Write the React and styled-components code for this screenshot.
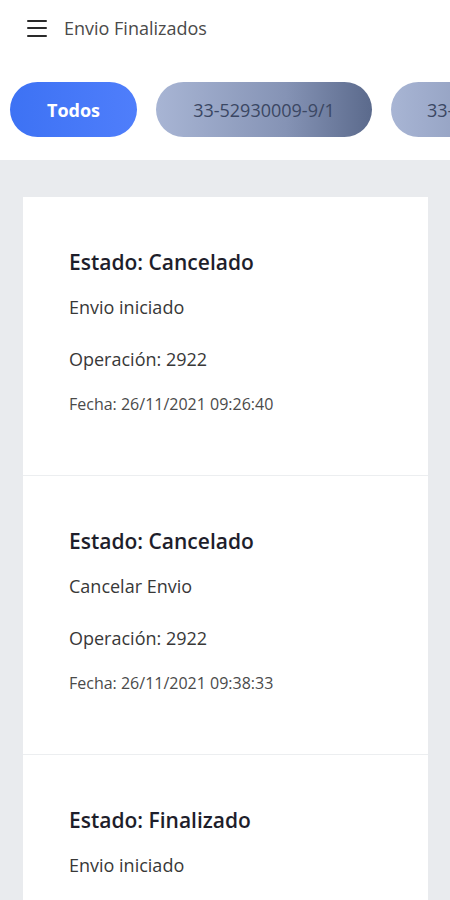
import React from "react";
import styled, { createGlobalStyle } from "styled-components";

const GlobalStyle = createGlobalStyle`
  body {
    margin: 0;
    font-family: "Open Sans", "Noto Sans", sans-serif;
    background: #e9ebee;
  }
`;

const Page = styled.div`
  width: 450px;
  height: 900px;
  background: #e9ebee;
  overflow: hidden;
`;

const Header = styled.header`
  background: #ffffff;
  height: 160px;
`;

const TopBar = styled.div`
  display: flex;
  align-items: center;
  gap: 17px;
  height: 56px;
  padding-left: 27px;
`;

const Burger = styled.div`
  display: flex;
  flex-direction: column;
  justify-content: space-between;
  width: 20px;
  height: 17px;

  span {
    display: block;
    height: 2px;
    background: #2a2a2a;
    border-radius: 1px;
  }
`;

const Title = styled.h1`
  margin: 0;
  font-size: 18px;
  font-weight: 400;
  color: #4a4a4a;
`;

const Chips = styled.div`
  display: flex;
  gap: 19px;
  padding: 26px 0 0 10px;
  white-space: nowrap;
  overflow: hidden;
`;

const Chip = styled.button`
  flex: none;
  height: 55px;
  width: ${(p) => p.$width}px;
  border: none;
  border-radius: 28px;
  font-family: inherit;
  font-size: 18px;
  font-weight: ${(p) => (p.$active ? 700 : 400)};
  color: ${(p) => (p.$active ? "#ffffff" : "#3b4763")};
  background: ${(p) =>
    p.$active
      ? "linear-gradient(90deg, #3d72f4, #4f7efb)"
      : "linear-gradient(90deg, #a8b5d4, #8593b5 60%, #5b6a8c)"};
  text-align: ${(p) => (p.$cut ? "left" : "center")};
  padding: ${(p) => (p.$cut ? "0 0 0 36px" : "0")};
`;

const Content = styled.main`
  padding: 37px 22px 0 23px;
`;

const Card = styled.section`
  background: #ffffff;
`;

const Item = styled.article`
  padding: 51px 46px 60px;
  border-bottom: 1px solid #eceef0;
`;

const State = styled.h2`
  margin: 0;
  font-size: 21px;
  line-height: 28px;
  font-weight: 600;
  color: #1e1e2b;
`;

const Action = styled.p`
  margin: 19px 0 0;
  font-size: 18px;
  line-height: 24px;
  color: #383838;
`;

const Operation = styled.p`
  margin: 28px 0 0;
  font-size: 18px;
  line-height: 24px;
  color: #383838;
`;

const DateText = styled.p`
  margin: 22px 0 0;
  font-size: 16px;
  line-height: 22px;
  color: #4a4a4a;
`;

const envios = [
  { estado: "Cancelado", accion: "Envio iniciado", op: 2922, fecha: "26/11/2021 09:26:40" },
  { estado: "Cancelado", accion: "Cancelar Envio", op: 2922, fecha: "26/11/2021 09:38:33" },
  { estado: "Finalizado", accion: "Envio iniciado", op: 2922, fecha: "26/11/2021 09:41:12" },
];

export default function App() {
  return (
    <Page>
      <GlobalStyle />
      <Header>
        <TopBar>
          <Burger>
            <span />
            <span />
            <span />
          </Burger>
          <Title>Envio Finalizados</Title>
        </TopBar>
        <Chips>
          <Chip $active $width={127}>Todos</Chip>
          <Chip $width={216}>33-52930009-9/1</Chip>
          <Chip $width={216} $cut>33-52930009-9/2</Chip>
        </Chips>
      </Header>
      <Content>
        <Card>
          {envios.map((e, i) => (
            <Item key={i}>
              <State>Estado: {e.estado}</State>
              <Action>{e.accion}</Action>
              <Operation>Operación: {e.op}</Operation>
              <DateText>Fecha: {e.fecha}</DateText>
            </Item>
          ))}
        </Card>
      </Content>
    </Page>
  );
}
